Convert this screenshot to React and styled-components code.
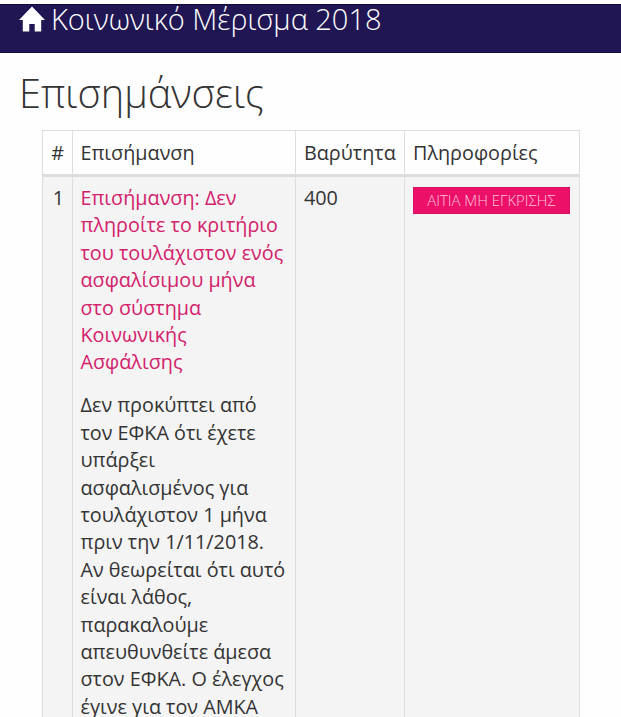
import React from 'react';
import styled, { createGlobalStyle } from 'styled-components';

const GlobalStyle = createGlobalStyle`
  * {
    box-sizing: border-box;
  }

  body {
    margin: 0;
    background: #fefefe;
    color: #333;
    font-family: "Open Sans", "Noto Sans", sans-serif;
    font-size: 19.8px;
    line-height: 27.4px;
  }
`;

const Page = styled.div`
  width: 100%;
  height: 717px;
  padding-top: 4px;
  overflow: hidden;
`;

const Navbar = styled.header`
  display: flex;
  align-items: flex-start;
  height: 49px;
  padding-left: 19px;
  background: #1f1653;
  border-top: 1px solid #110b40;
  border-bottom: 1px solid #150d45;
  color: #fff;
`;

const HomeIcon = styled.svg`
  width: 26px;
  height: 26px;
  margin-top: 1px;
  fill: #fff;
`;

const Brand = styled.span`
  margin-left: 6px;
  font-size: 29px;
  font-weight: 300;
  line-height: 27px;
  white-space: nowrap;
`;

const Title = styled.h1`
  margin: 13px 0 10px 19px;
  font-size: 39.7px;
  font-weight: 300;
  line-height: 54px;
`;

const Table = styled.table`
  width: 538px;
  margin-left: 42px;
  table-layout: fixed;
  border-collapse: separate;
  border-spacing: 0;
  border-top: 1px solid #ddd;
  border-left: 1px solid #ddd;
`;

const Column = styled.col`
  width: ${({ $width }) => $width}px;
`;

const HeadCell = styled.th`
  height: 46px;
  padding: 0 8px 0 ${({ $indent }) => $indent || 8}px;
  border-right: 1px solid #ddd;
  border-bottom: 3px solid #ddd;
  font-weight: 400;
  text-align: ${({ $align }) => $align || 'left'};
  white-space: nowrap;
`;

const Cell = styled.td`
  height: 600px;
  padding: 7px 8px 0 ${({ $indent }) => $indent || 8}px;
  background: #f4f4f4;
  border-right: 1px solid #ddd;
  text-align: ${({ $align }) => $align || 'left'};
  vertical-align: top;
`;

const Note = styled.p`
  margin: 0 0 15.5px;
  color: ${({ $accent }) => ($accent ? '#d3216b' : '#333')};
  white-space: pre;
`;

const ReasonButton = styled.button`
  display: block;
  width: 157px;
  height: 27px;
  margin-top: 3px;
  padding: 0;
  border: 1px solid #d90f63;
  background: #ec1069;
  color: #ffc4dd;
  font-family: inherit;
  font-size: 14.9px;
  font-weight: 300;
  line-height: 25px;
  white-space: nowrap;
`;

const noteTitle = [
  'Επισήμανση: Δεν',
  'πληροίτε το κριτήριο',
  'του τουλάχιστον ενός',
  'ασφαλίσιμου μήνα',
  'στο σύστημα',
  'Κοινωνικής',
  'Ασφάλισης',
];

const noteText = [
  'Δεν προκύπτει από',
  'τον ΕΦΚΑ ότι έχετε',
  'υπάρξει',
  'ασφαλισμένος για',
  'τουλάχιστον 1 μήνα',
  'πριν την 1/11/2018.',
  'Αν θεωρείται ότι αυτό',
  'είναι λάθος,',
  'παρακαλούμε',
  'απευθυνθείτε άμεσα',
  'στον ΕΦΚΑ. Ο έλεγχος',
  'έγινε για τον ΑΜΚΑ',
];

function App() {
  return (
    <Page>
      <GlobalStyle />
      <Navbar>
        <HomeIcon viewBox="0 0 26 26">
          <path d="M13 0.5 L26 14 H22.2 V25.5 H15.7 V18 H10.3 V25.5 H3.8 V14 H0 L6 7.8 Z" />
        </HomeIcon>
        <Brand>Κοινωνικό Μέρισμα 2018</Brand>
      </Navbar>
      <Title>Επισημάνσεις</Title>
      <Table>
        <colgroup>
          <Column $width={30} />
          <Column $width={223} />
          <Column $width={109} />
          <Column $width={175} />
        </colgroup>
        <thead>
          <tr>
            <HeadCell $align="right">#</HeadCell>
            <HeadCell $indent={7.5}>Επισήμανση</HeadCell>
            <HeadCell>Βαρύτητα</HeadCell>
            <HeadCell>Πληροφορίες</HeadCell>
          </tr>
        </thead>
        <tbody>
          <tr>
            <Cell $align="right">1</Cell>
            <Cell $indent={7.5}>
              <Note $accent>{noteTitle.join('\n')}</Note>
              <Note>{noteText.join('\n')}</Note>
            </Cell>
            <Cell>400</Cell>
            <Cell>
              <ReasonButton>ΑΙΤΙΑ ΜΗ ΕΓΚΡΙΣΗΣ</ReasonButton>
            </Cell>
          </tr>
        </tbody>
      </Table>
    </Page>
  );
}

export default App;
